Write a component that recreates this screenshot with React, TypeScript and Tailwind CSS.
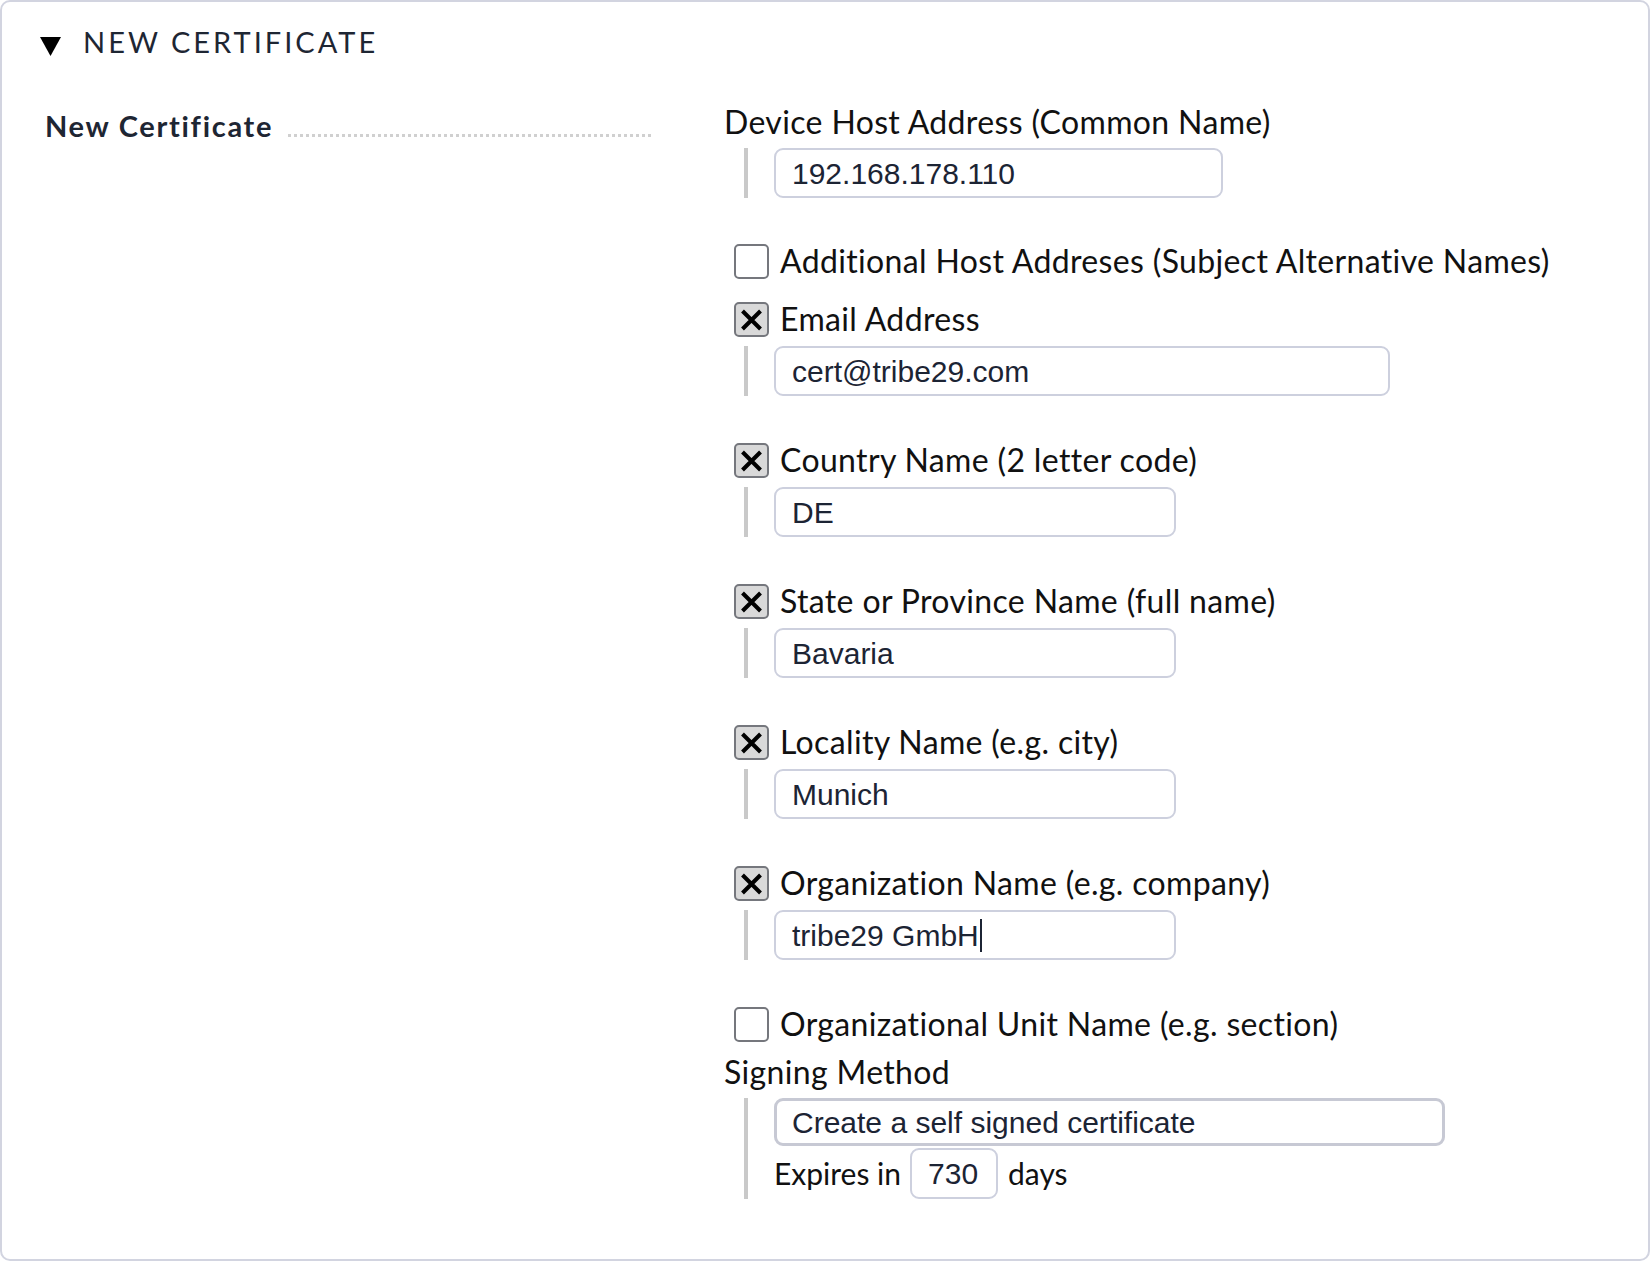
import React from 'react';

const labelFont = { fontFamily: 'Lato, "Noto Sans", sans-serif' };

function Bar({ children, className = '' }: { children: React.ReactNode; className?: string }) {
  return (
    <div className={`ml-[20px] border-l-[4px] border-[#c9c9c9] pl-[26px] ${className}`}>{children}</div>
  );
}

function TextInput({ value, width, caret = false }: { value: string; width: string; caret?: boolean }) {
  return (
    <div
      className={`${width} h-[50px] flex items-center rounded-[9px] border-2 border-[#cdd0de] bg-white pl-[16px] text-[30px] text-[#1c2434] font-['Liberation_Sans',Arial,sans-serif]`}
    >
      <span>{value}</span>
      {caret && <span className="ml-[1px] inline-block h-[33px] w-[2px] bg-[#1c2434]" />}
    </div>
  );
}

function Checkbox({ checked }: { checked: boolean }) {
  return (
    <div
      className={`flex h-[35px] w-[35px] items-center justify-center rounded-[5px] border-2 border-[#75777d] ${
        checked ? 'bg-[#d9d9d9]' : 'bg-white'
      }`}
    >
      {checked && (
        <svg width="27" height="27" viewBox="0 0 27 27">
          <path d="M4.5 5 L22.5 23 M22.5 5 L4.5 23" stroke="#000" strokeWidth="4" strokeLinecap="butt" />
        </svg>
      )}
    </div>
  );
}

function CheckRow({ label, checked, className = '' }: { label: string; checked: boolean; className?: string }) {
  return (
    <div className={`ml-[10px] flex h-[44px] items-center gap-[11px] ${className}`}>
      <Checkbox checked={checked} />
      <span className="text-[32px] tracking-[0.35px] text-[#111111] [font-variant-ligatures:none]">{label}</span>
    </div>
  );
}

interface Field {
  label: string;
  value: string;
  width: string;
  caret?: boolean;
}

const fields: Field[] = [
  { label: 'Country Name (2 letter code)', value: 'DE', width: 'w-[402px]' },
  { label: 'State or Province Name (full name)', value: 'Bavaria', width: 'w-[402px]' },
  { label: 'Locality Name (e.g. city)', value: 'Munich', width: 'w-[402px]' },
  { label: 'Organization Name (e.g. company)', value: 'tribe29 GmbH', width: 'w-[402px]', caret: true },
];

export default function App() {
  return (
    <div className="h-[1261px] w-[1650px] bg-white" style={labelFont}>
      <div className="h-full w-full rounded-[10px] border-2 border-[#d2d4e0]">
        {/* Header */}
        <div className="flex h-[80px] items-center pl-[38px]">
          <svg width="21" height="19" viewBox="0 0 21 19" className="mt-[8px]">
            <polygon points="0,0 21,0 10.5,19" fill="#000" />
          </svg>
          <span className="ml-[22px] text-[29px] tracking-[3px] text-[#1e2633] [font-variant-ligatures:none]">
            NEW CERTIFICATE
          </span>
        </div>

        {/* Content */}
        <div className="mt-[22px] flex pl-[43px]">
          <div className="flex h-[36px] w-[606px] items-baseline">
            <span className="text-[29px] font-bold tracking-[1.7px] text-[#1e2633] [font-variant-ligatures:none]">
              New Certificate
            </span>
            <div className="ml-[15px] flex-1 border-b-[3px] border-dotted border-[#d0d0d0]" />
          </div>

          <div className="ml-[73px] flex flex-col">
            <div className="h-[36px] text-[32px] leading-[36px] tracking-[0.35px] text-[#111111] [font-variant-ligatures:none]">
              Device Host Address (Common Name)
            </div>
            <Bar className="mt-[8px]">
              <TextInput value="192.168.178.110" width="w-[449px]" />
            </Bar>

            <CheckRow className="mt-[41px]" label="Additional Host Addreses (Subject Alternative Names)" checked={false} />

            <CheckRow className="mt-[14px]" label="Email Address" checked />
            <Bar className="mt-[5px]">
              <TextInput value="cert@tribe29.com" width="w-[616px]" />
            </Bar>

            {fields.map((f) => (
              <div key={f.label} className="mt-[42px]">
                <CheckRow label={f.label} checked />
                <Bar className="mt-[5px]">
                  <TextInput value={f.value} width={f.width} caret={f.caret} />
                </Bar>
              </div>
            ))}

            <CheckRow className="mt-[42px]" label="Organizational Unit Name (e.g. section)" checked={false} />

            <div className="mt-[8px] h-[36px] text-[32px] leading-[36px] tracking-[0.35px] text-[#111111] [font-variant-ligatures:none]">
              Signing Method
            </div>
            <Bar className="mt-[8px]">
              <div className="flex h-[48px] w-[671px] items-center rounded-[9px] border-[3px] border-[#c7c9d4] bg-white pl-[15px] text-[30px] text-[#1c2434] font-['Liberation_Sans',Arial,sans-serif]">
                Create a self signed certificate
              </div>
              <div className="mt-[2px] flex items-center text-[30px] text-[#111111] [font-variant-ligatures:none]">
                <span>Expires in</span>
                <div className="ml-[9px] flex h-[51px] w-[88px] items-center rounded-[9px] border-2 border-[#cdd0de] pl-[16px] text-[30px] text-[#1c2434] font-['Liberation_Sans',Arial,sans-serif]">
                  730
                </div>
                <span className="ml-[10px]">days</span>
              </div>
            </Bar>
          </div>
        </div>
      </div>
    </div>
  );
}
